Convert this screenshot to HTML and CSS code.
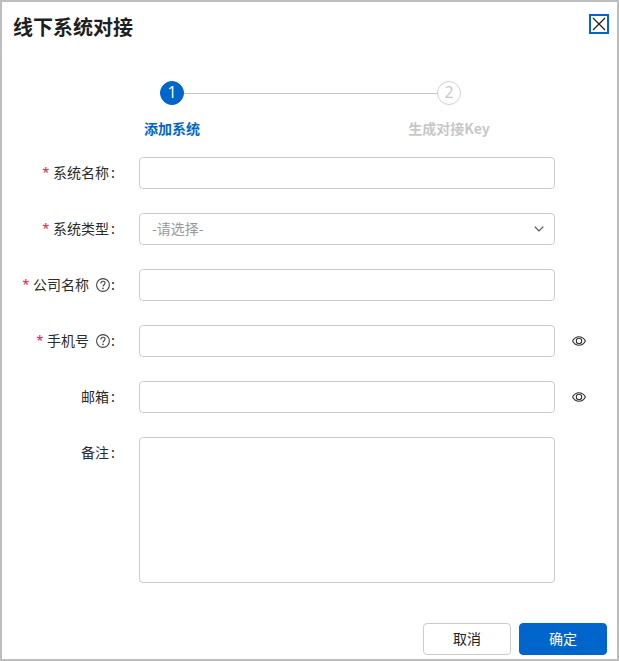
FILE: index.html
```html
<!DOCTYPE html>
<html lang="zh-CN">
<head>
  <meta charset="UTF-8">
  <meta name="viewport" content="width=device-width, initial-scale=1.0">
  <title>线下系统对接</title>
  <link rel="stylesheet" href="styles.css">
</head>
<body>
  <div class="dialog">
    <header class="dialog-header">
      <h1>线下系统对接</h1>
      <button type="button" class="close-btn" aria-label="关闭">
        <svg width="16" height="16" viewBox="0 0 16 16"><path d="M2 2l12 12M14 2L2 14" stroke="#222" stroke-width="1.3" fill="none"/></svg>
      </button>
    </header>

    <div class="steps">
      <div class="steps-track">
        <span class="step-dot active">1</span>
        <span class="step-line"></span>
        <span class="step-dot">2</span>
      </div>
      <div class="steps-labels">
        <span class="step-label active">添加系统</span>
        <span class="step-label">生成对接Key</span>
      </div>
    </div>

    <form class="form">
      <div class="form-group">
        <label class="form-label"><span class="req">*</span>系统名称<span class="colon">:</span></label>
        <input type="text" class="form-input">
      </div>
      <div class="form-group">
        <label class="form-label"><span class="req">*</span>系统类型<span class="colon">:</span></label>
        <div class="form-input select">
          <span class="placeholder">-请选择-</span>
          <svg width="10" height="6" viewBox="0 0 10 6"><path d="M.7.7L5 5l4.300-4.300" stroke="#555" stroke-width="1.2" fill="none"/></svg>
        </div>
      </div>
      <div class="form-group">
        <label class="form-label"><span class="req">*</span>公司名称
          <svg class="help" width="14" height="14" viewBox="0 0 14 14"><circle cx="7" cy="7" r="6.400" stroke="#444" stroke-width="1.100" fill="none"/><path d="M4.900 5.400c0-1.300 1-2.100 2.100-2.100s2.100.8 2.100 1.900c0 1.600-2.100 1.600-2.100 3.300" stroke="#444" stroke-width="1.100" fill="none"/><circle cx="7" cy="10.400" r=".8" fill="#444"/></svg><span class="colon">:</span></label>
        <input type="text" class="form-input">
      </div>
      <div class="form-group">
        <label class="form-label"><span class="req">*</span>手机号
          <svg class="help" width="14" height="14" viewBox="0 0 14 14"><circle cx="7" cy="7" r="6.400" stroke="#444" stroke-width="1.100" fill="none"/><path d="M4.900 5.400c0-1.300 1-2.100 2.100-2.100s2.100.8 2.100 1.900c0 1.600-2.100 1.600-2.100 3.300" stroke="#444" stroke-width="1.100" fill="none"/><circle cx="7" cy="10.400" r=".8" fill="#444"/></svg><span class="colon">:</span></label>
        <input type="text" class="form-input">
        <svg class="eye" width="14" height="10" viewBox="0 0 14 10"><path d="M.6 5C2 2.300 4.300.7 7 .7s5 1.600 6.400 4.300C12 7.700 9.700 9.300 7 9.300S2 7.700.6 5z" stroke="#333" stroke-width="1.100" fill="none"/><circle cx="7" cy="5" r="2.700" stroke="#333" stroke-width="1.100" fill="none"/></svg>
      </div>
      <div class="form-group">
        <label class="form-label">邮箱<span class="colon">:</span></label>
        <input type="text" class="form-input">
        <svg class="eye" width="14" height="10" viewBox="0 0 14 10"><path d="M.6 5C2 2.300 4.300.7 7 .7s5 1.600 6.400 4.300C12 7.700 9.700 9.300 7 9.300S2 7.700.6 5z" stroke="#333" stroke-width="1.100" fill="none"/><circle cx="7" cy="5" r="2.700" stroke="#333" stroke-width="1.100" fill="none"/></svg>
      </div>
      <div class="form-group">
        <label class="form-label">备注<span class="colon">:</span></label>
        <textarea class="form-input form-textarea"></textarea>
      </div>
    </form>

    <footer class="dialog-footer">
      <button type="button" class="btn">取消</button>
      <button type="button" class="btn btn-primary">确定</button>
    </footer>
  </div>
</body>
</html>
```

FILE: styles.css
```css
* {
  box-sizing: border-box;
}

body {
  margin: 0;
  font-family: "Noto Sans CJK SC", "Noto Sans", sans-serif;
  font-size: 14px;
  color: #222;
  background: #fff;
}

.dialog {
  width: 619px;
  height: 661px;
  border: 2px solid #bdbdbd;
  background: #fff;
  display: flex;
  flex-direction: column;
  overflow: hidden;
}

.dialog-header {
  position: relative;
  height: 79px;
  padding: 10px 0 0 11px;
}

.dialog-header h1 {
  margin: 0;
  font-size: 20px;
  line-height: 30px;
  font-weight: 700;
  color: #1f1f1f;
}

.close-btn {
  position: absolute;
  top: 12px;
  right: 8px;
  width: 20px;
  height: 20px;
  padding: 0;
  border: 2px solid #0066cc;
  background: #fff;
  display: flex;
  align-items: center;
  justify-content: center;
}

.steps {
  width: 437px;
  margin-left: 90px;
}

.steps-track {
  display: flex;
  align-items: center;
  padding: 0 68px;
}

.step-dot {
  width: 24px;
  height: 24px;
  flex: none;
  border-radius: 50%;
  border: 1px solid #d0d0d0;
  color: #c8c8c8;
  font-family: "Open Sans", sans-serif;
  font-size: 16px;
  line-height: 21px;
  text-align: center;
}

.step-dot.active {
  background: #0066cc;
  border-color: #0066cc;
  color: #fff;
}

.step-line {
  flex: 1;
  height: 1px;
  background: #c4c4c4;
}

.steps-labels {
  display: flex;
  justify-content: space-between;
  margin-top: 13px;
}

.step-label {
  width: 160px;
  text-align: center;
  font-weight: 700;
  line-height: 20px;
  color: #c8c8c8;
}

.step-label.active {
  color: #0066cc;
}

.form {
  margin-top: 19px;
  padding-left: 137px;
}

.form-group {
  position: relative;
  display: flex;
  margin-bottom: 24px;
}

.form-label {
  position: absolute;
  right: 100%;
  top: 0;
  margin-right: 24px;
  line-height: 30px;
  white-space: nowrap;
  display: flex;
  align-items: center;
  color: #2b2b2b;
}

.req {
  color: #d9264f;
  font-family: "Liberation Sans", sans-serif;
  font-size: 17px;
  line-height: 20px;
  margin-top: 4px;
  margin-right: 4px;
}

.colon {
  margin-left: 2px;
}

.help {
  margin-left: 7px;
  margin-top: 2px;
}

.help + .colon {
  margin-left: 1px;
}

.form-input {
  width: 416px;
  height: 32px;
  padding: 0 12px;
  border: 1px solid #ccc;
  border-radius: 4px;
  background: #fff;
  font: inherit;
}

.select {
  display: flex;
  align-items: center;
  justify-content: space-between;
  padding-right: 10px;
}

.placeholder {
  color: #999;
  line-height: 28px;
  margin-bottom: 2px;
}

.form-textarea {
  height: 146px;
  resize: none;
  display: block;
}

.eye {
  align-self: center;
  margin-left: 17px;
}

.dialog-footer {
  margin-top: auto;
  display: flex;
  justify-content: flex-end;
  gap: 8px;
  padding: 0 10px 4px 0;
}

.btn {
  width: 88px;
  height: 32px;
  padding: 0 0 2px;
  border: 1px solid #ccc;
  border-radius: 4px;
  background: #fff;
  color: #222;
  font: inherit;
  cursor: pointer;
}

.btn-primary {
  background: #0066cc;
  border-color: #0066cc;
  color: #fff;
}
```
